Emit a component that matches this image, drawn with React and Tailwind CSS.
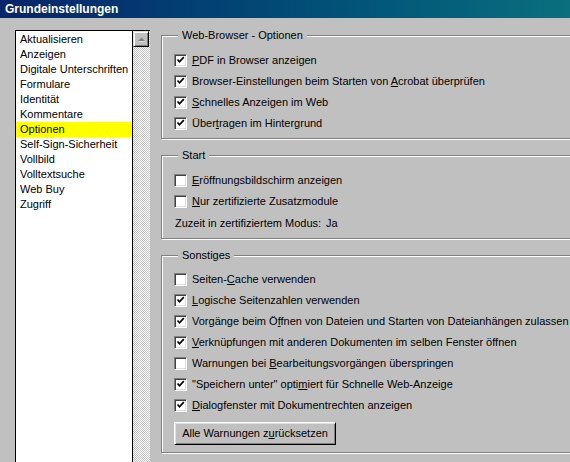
import React from 'react';

const items = [
  'Aktualisieren',
  'Anzeigen',
  'Digitale Unterschriften',
  'Formulare',
  'Identität',
  'Kommentare',
  'Optionen',
  'Self-Sign-Sicherheit',
  'Vollbild',
  'Volltextsuche',
  'Web Buy',
  'Zugriff',
];

function Check({ checked }) {
  return (
    <div className="w-[13px] h-[13px] shrink-0 bg-white border-t border-l border-t-[#808080] border-l-[#808080] border-b border-r border-b-white border-r-white shadow-[inset_1px_1px_0_#404040,inset_-1px_-1px_0_#dfdfdf] flex items-center justify-center">
      {checked && (
        <svg width="9" height="9" viewBox="0 0 9 9">
          <path d="M1.5 3.5 L3.5 5.8 L7.8 1.2" fill="none" stroke="#000" strokeWidth="1.7" />
        </svg>
      )}
    </div>
  );
}

function Row({ checked, children }) {
  return (
    <div className="h-[21px] flex items-center gap-[5px]">
      <Check checked={checked} />
      <span>{children}</span>
    </div>
  );
}

function Group({ title, className, children }) {
  return (
    <div className={`relative border border-[#808080] shadow-[inset_1px_1px_0_#fff,1px_1px_0_#fff] pl-[12px] ${className}`}>
      <span className="absolute -top-[8px] left-[16px] px-[4px] bg-[#c0c0c0] leading-[14px]">{title}</span>
      {children}
    </div>
  );
}

export default function App() {
  return (
    <div
      className="w-[570px] h-[462px] overflow-hidden bg-[#c0c0c0] text-[11px] text-black"
      style={{ fontFamily: '"Liberation Sans", Arial, sans-serif' }}
    >
      <div className="h-[18px] bg-gradient-to-r from-[#08246b] to-[#0b6f7e] flex items-center pl-[5px] text-white font-bold text-[12px]">
        Grundeinstellungen
      </div>

      <div className="flex pt-[12px]">
        {/* category list */}
        <div className="ml-[15px] h-[440px] flex border-l border-t border-black shrink-0">
          <div className="w-[117px] bg-white border-r border-black pt-[1px]">
            {items.map((it) => (
              <div
                key={it}
                className={`h-[15px] leading-[15px] pl-[4px] ${it === 'Optionen' ? 'bg-[#ffff00]' : ''}`}
              >
                {it}
              </div>
            ))}
          </div>
          <div className="w-[17px] flex flex-col bg-[repeating-conic-gradient(#ffffff_0_25%,#c0c0c0_0_50%)] bg-[length:2px_2px]">
            <div className="w-[16px] h-[16px] bg-[#c0c0c0] border-t border-l border-t-[#dfdfdf] border-l-[#dfdfdf] border-b border-r border-b-black border-r-black shadow-[inset_1px_1px_0_#fff,inset_-1px_-1px_0_#808080] flex items-center justify-center">
              <svg width="9" height="6" viewBox="0 0 9 6">
                <path d="M1 5 L4.5 1.5 L8 5 Z" fill="#808080" />
                <path d="M2 6 L8 6" stroke="#fff" strokeWidth="1" />
              </svg>
            </div>
          </div>
        </div>

        {/* options */}
        <div className="ml-[11px] w-[420px] shrink-0 pt-[5px] flex flex-col">
          <Group title="Web-Browser - Optionen" className="h-[104px] pt-[14px]">
            <Row checked><u>P</u>DF in Browser anzeigen</Row>
            <Row checked>Browser-Einstellungen beim Starten von <u>A</u>crobat überprüfen</Row>
            <Row checked><u>S</u>chnelles Anzeigen im Web</Row>
            <Row checked>Über<u>t</u>ragen im Hintergrund</Row>
          </Group>

          <Group title="Start" className="mt-[16px] h-[84px] pt-[14px]">
            <Row><u>E</u>röffnungsbildschirm anzeigen</Row>
            <Row><u>N</u>ur zertifizierte Zusatzmodule</Row>
            <div className="h-[22px] flex items-center pl-[1px]">
              <span className="w-[151px]">Zuzeit in zertifiziertem Modus:</span>
              <span>Ja</span>
            </div>
          </Group>

          <Group title="Sonstiges" className="mt-[16px] h-[198px] pt-[13px]">
            <Row>Seiten-<u>C</u>ache verwenden</Row>
            <Row checked><u>L</u>ogische Seitenzahlen verwenden</Row>
            <Row checked>Vorgänge beim Ö<u>f</u>fnen von Dateien und Starten von Dateianhängen zulassen</Row>
            <Row checked><u>V</u>erknüpfungen mit anderen Dokumenten im selben Fenster öffnen</Row>
            <Row>Warnungen bei <u>B</u>earbeitungsvorgängen überspringen</Row>
            <Row checked>"Speichern unter" opti<u>m</u>iert für Schnelle Web-Anzeige</Row>
            <Row checked><u>D</u>ialogfenster mit Dokumentrechten anzeigen</Row>
            <div className="mt-[6px] w-[162px] h-[23px] bg-[#c0c0c0] border-t border-l border-t-white border-l-white border-b border-r border-b-black border-r-black shadow-[inset_1px_1px_0_#dfdfdf,inset_-1px_-1px_0_#808080] flex items-center justify-center">
              Alle Warnungen z<u>u</u>rücksetzen
            </div>
          </Group>
        </div>
      </div>
    </div>
  );
}
